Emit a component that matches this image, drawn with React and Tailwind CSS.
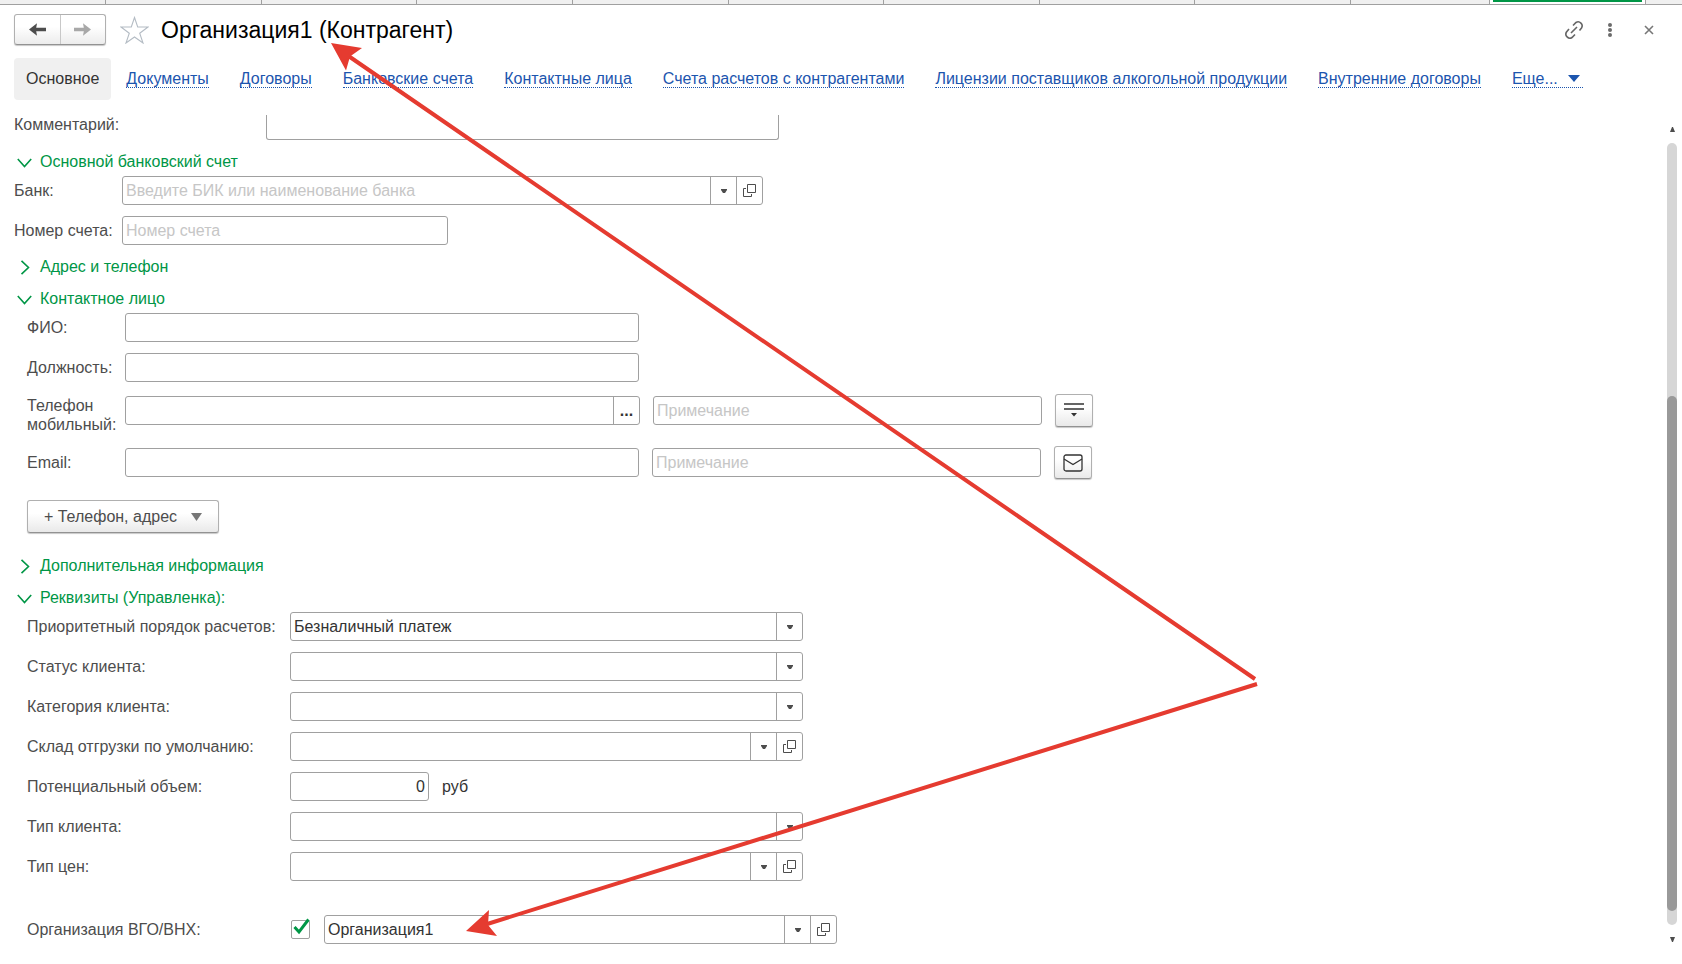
import { useState } from "react";

const openTabs = [1, 2, 3, 4, 5, 6, 7, 8];

const links = [
  "Документы",
  "Договоры",
  "Банковские счета",
  "Контактные лица",
  "Счета расчетов с контрагентами",
  "Лицензии поставщиков алкогольной продукции",
  "Внутренние договоры",
];

const box = "flex h-[29px] rounded-[3px] border border-[#a0a0a0] bg-white";
const control = "min-w-0 flex-1 bg-transparent px-[3px] text-[#333] outline-none placeholder:text-[#c6c6c6]";
const cell = "flex shrink-0 items-center justify-center border-l border-[#a0a0a0]";
const raised =
  "flex h-[33px] items-center justify-center rounded-[3px] border border-[#b0b0b0] border-b-[#929292] bg-linear-to-b from-white from-40% to-[#e9e9e9] shadow-[0_1px_1px_#c8c8c8]";

function SmallArrow() {
  return (
    <svg width="6" height="4" viewBox="0 0 6 4" fill="#4d4d4d">
      <path d="M0 0h6v1L4 4H2L0 1z" />
    </svg>
  );
}

function OpenIcon() {
  return (
    <svg width="13" height="13" viewBox="0 0 13 13" fill="none" stroke="#4d4d4d">
      <path d="M4.5 .5h8v8h-8zM3 4.5H.5v8h8V10" />
    </svg>
  );
}

function OpenButton({ label }) {
  return (
    <button type="button" aria-label={`Открыть: ${label}`} className={`${cell} w-[26px]`}>
      <OpenIcon />
    </button>
  );
}

function SelectField({ id, label, value = "", withOpen = false, className = "" }) {
  return (
    <div className={`${box} ${className}`}>
      <select id={id} aria-label={label} defaultValue={value} className={`${control} appearance-none`}>
        <option value={value}>{value}</option>
      </select>
      <span className={`${cell} w-[26px]`} aria-hidden="true">
        <SmallArrow />
      </span>
      {withOpen && <OpenButton label={label} />}
    </div>
  );
}

function SectionTitle({ title, open = false, className = "" }) {
  return (
    <button
      type="button"
      aria-expanded={open}
      className={`flex h-5 items-center gap-2 pl-[3px] text-[#009646] ${className}`}
    >
      <svg width="15" height="15" viewBox="0 0 15 15" fill="none" stroke="currentColor" strokeWidth="1.6">
        {open ? <path d="M.8 4l6.700 7.500L14.200 4" /> : <path d="M4.500 .8l7 6.700-7 6.700" />}
      </svg>
      {title}
    </button>
  );
}

function Row({ id, label, labelWidth, children }) {
  return (
    <div className="flex items-center">
      <label htmlFor={id} className={`shrink-0 ${labelWidth}`}>
        {label}
      </label>
      {children}
    </div>
  );
}

function TopTabs() {
  return (
    <div className="flex h-[5px] border-b border-[#a0a0a0] bg-[#f0f0f0]">
      <div className="w-[106px] border-r border-[#a0a0a0]" />
      <div className="flex flex-1">
        {openTabs.map((tab) => (
          <div key={tab} className="flex-1 border-r border-[#a0a0a0]" />
        ))}
      </div>
      <div className="w-[139px] border-r border-[#a0a0a0]" />
      <div className="w-[156px] border-r border-[#a0a0a0] bg-white px-[3px]">
        <div className="h-[2px] bg-[#009646]" />
      </div>
      <div className="w-9" />
    </div>
  );
}

function Header() {
  return (
    <header className="flex h-[53px] items-center px-3.5 pb-1">
      <div className="flex h-[31px] w-[92px] rounded-[3px] border border-[#b0b0b0] border-b-[#929292] bg-linear-to-b from-white from-40% to-[#ececec] shadow-[0_1px_1px_#c8c8c8]">
        <button type="button" aria-label="Назад" className="flex flex-1 items-center justify-center">
          <svg width="17" height="13" viewBox="0 0 17 13" fill="#4d4d4d">
            <path d="M0 6.500L8 .3 7.200 4.800H17v3.400H7.200L8 12.700z" />
          </svg>
        </button>
        <button
          type="button"
          aria-label="Вперед"
          className="flex flex-1 items-center justify-center border-l border-[#c8c8c8]"
        >
          <svg width="17" height="13" viewBox="0 0 17 13" fill="#a8a8a8">
            <path d="M17 6.500L9 .3l.8 4.500H0v3.400h9.800L9 12.700z" />
          </svg>
        </button>
      </div>
      <button type="button" aria-label="В избранное" className="ml-3.5">
        <svg width="29" height="28" viewBox="0 0 29 28" fill="none" stroke="#b4bcc4" strokeWidth="1.1">
          <path d="M14.500 1.500l3.200 9.500h10.300l-8.300 6.200 3.300 9.800-8.500-6-8.500 6 3.300-9.800L1 11h10.300z" />
        </svg>
      </button>
      <h1 className="ml-3 text-[23px] text-black">Организация1 (Контрагент)</h1>
      <div className="ml-auto flex items-center pr-3.5">
        <button type="button" aria-label="Ссылка" className="mr-6">
          <svg width="20" height="20" viewBox="0 0 20 20" fill="none" stroke="#666" strokeWidth="1.6">
            <path d="M9 5.500L12 2.500a4 4 0 0 1 5.500 5.500L15.500 10.500M11 14.500L8 17.500A4 4 0 0 1 2.500 12L5 9M7 13l6-6" />
          </svg>
        </button>
        <button type="button" aria-label="Меню" className="mr-8">
          <svg width="4" height="14" viewBox="0 0 4 14" fill="#6b6b6b">
            <circle cx="2" cy="2" r="2" />
            <circle cx="2" cy="7" r="2" />
            <circle cx="2" cy="12" r="2" />
          </svg>
        </button>
        <button type="button" aria-label="Закрыть">
          <svg width="10" height="10" viewBox="0 0 10 10" stroke="#777" strokeWidth="1.6">
            <path d="M1 1l8 8M9 1L1 9" />
          </svg>
        </button>
      </div>
    </header>
  );
}

function Navigation() {
  return (
    <nav className="flex h-[42px] items-center gap-[31px] px-3.5 whitespace-nowrap text-[#1c55ae]">
      <a
        href="#main"
        aria-current="page"
        className="-mr-4 flex h-full items-center rounded-[4px] bg-[#f0f0f0] px-3 text-[#333]"
      >
        Основное
      </a>
      {links.map((link) => (
        <a key={link} href="#link" className="border-b border-dotted border-[#1c55ae] leading-4">
          {link}
        </a>
      ))}
      <button type="button" className="flex items-center gap-2.5 border-b border-dotted border-[#1c55ae] pr-[3px] leading-4">
        Еще...
        <svg width="12" height="7" viewBox="0 0 12 7" fill="currentColor">
          <path d="M0 0h12L6 7z" />
        </svg>
      </button>
    </nav>
  );
}

function BankSection() {
  return (
    <>
      <SectionTitle title="Основной банковский счет" open className="mt-3" />
      <div className="mt-1 flex flex-col gap-[11px]">
        <Row id="bank" label="Банк:" labelWidth="w-[108px]">
          <div className={`${box} w-[641px]`}>
            <input id="bank" type="text" placeholder="Введите БИК или наименование банка" className={control} />
            <button type="button" aria-label="Выбрать банк" className={`${cell} w-[26px]`}>
              <SmallArrow />
            </button>
            <OpenButton label="Банк" />
          </div>
        </Row>
        <Row id="account" label="Номер счета:" labelWidth="w-[108px]">
          <div className={`${box} w-[326px]`}>
            <input id="account" type="text" placeholder="Номер счета" className={control} />
          </div>
        </Row>
      </div>
    </>
  );
}

function ContactSection() {
  return (
    <>
      <SectionTitle title="Контактное лицо" open className="mt-3" />
      <div className="mt-1 flex flex-col pl-[13px]">
        <Row id="fio" label="ФИО:" labelWidth="w-[98px]">
          <div className={`${box} w-[514px]`}>
            <input id="fio" type="text" className={control} />
          </div>
        </Row>
        <div className="mt-[11px]">
          <Row id="position" label="Должность:" labelWidth="w-[98px]">
            <div className={`${box} w-[514px]`}>
              <input id="position" type="text" className={control} />
            </div>
          </Row>
        </div>
        <div className="mt-1 leading-[19px]">
          <Row id="phone" label="Телефон мобильный:" labelWidth="w-[98px] pt-2.5">
            <div className={`${box} w-[515px]`}>
              <input id="phone" type="text" className={control} />
              <button type="button" aria-label="Изменить телефон" className={`${cell} w-[26px] font-bold text-[#333]`}>
                ...
              </button>
            </div>
            <div className={`${box} ml-[13px] w-[389px]`}>
              <input type="text" aria-label="Примечание к телефону" placeholder="Примечание" className={control} />
            </div>
            <button type="button" aria-label="Действия с телефоном" className={`${raised} ml-[13px] w-[38px]`}>
              <svg width="20" height="14" viewBox="0 0 20 14" fill="none" stroke="#333" strokeWidth="1.5">
                <path d="M0 1h20M0 6h20" />
                <path d="M7 10h6l-3 3.500z" fill="#333" stroke="none" />
              </svg>
            </button>
          </Row>
        </div>
        <div className="mt-3">
          <Row id="email" label="Email:" labelWidth="w-[98px]">
            <div className={`${box} w-[514px]`}>
              <input id="email" type="email" className={control} />
            </div>
            <div className={`${box} ml-[13px] w-[389px]`}>
              <input type="text" aria-label="Примечание к email" placeholder="Примечание" className={control} />
            </div>
            <button type="button" aria-label="Написать письмо" className={`${raised} ml-[13px] w-[38px]`}>
              <svg width="20" height="18" viewBox="0 0 20 18" fill="none" stroke="#333" strokeWidth="1.3">
                <rect x="1" y="1" width="18" height="16" rx="2" />
                <path d="M1 5l9 5.500L19 5" />
              </svg>
            </button>
          </Row>
        </div>
        <button type="button" className={`${raised} mt-[21px] w-[192px] gap-3.5`}>
          <span>+ Телефон, адрес</span>
          <svg width="11" height="8" viewBox="0 0 11 8" fill="#777">
            <path d="M0 0h11L5.500 8z" />
          </svg>
        </button>
      </div>
    </>
  );
}

function RequisitesSection() {
  const [isInternal, setIsInternal] = useState(true);

  return (
    <>
      <SectionTitle title="Реквизиты (Управленка):" open className="mt-3" />
      <div className="mt-1 flex flex-col gap-[11px] pl-[13px]">
        <Row id="priority" label="Приоритетный порядок расчетов:" labelWidth="w-[263px]">
          <SelectField id="priority" label="Приоритетный порядок расчетов" value="Безналичный платеж" className="w-[513px]" />
        </Row>
        <Row id="status" label="Статус клиента:" labelWidth="w-[263px]">
          <SelectField id="status" label="Статус клиента" className="w-[513px]" />
        </Row>
        <Row id="category" label="Категория клиента:" labelWidth="w-[263px]">
          <SelectField id="category" label="Категория клиента" className="w-[513px]" />
        </Row>
        <Row id="warehouse" label="Склад отгрузки по умолчанию:" labelWidth="w-[263px]">
          <SelectField id="warehouse" label="Склад отгрузки по умолчанию" withOpen className="w-[513px]" />
        </Row>
        <Row id="volume" label="Потенциальный объем:" labelWidth="w-[263px]">
          <div className={`${box} w-[139px]`}>
            <input id="volume" type="text" defaultValue="0" className={`${control} text-right`} />
          </div>
          <span className="ml-[13px] text-[#333]">руб</span>
        </Row>
        <Row id="clientType" label="Тип клиента:" labelWidth="w-[263px]">
          <SelectField id="clientType" label="Тип клиента" className="w-[513px]" />
        </Row>
        <Row id="priceType" label="Тип цен:" labelWidth="w-[263px]">
          <SelectField id="priceType" label="Тип цен" withOpen className="w-[513px]" />
        </Row>
      </div>
      <div className="mt-[34px] pl-[13px]">
        <Row id="internal" label="Организация ВГО/ВНХ:" labelWidth="w-[264px]">
          <span className="relative mr-3.5 size-[19px]">
            <input
              id="internal"
              type="checkbox"
              checked={isInternal}
              onChange={(e) => setIsInternal(e.target.checked)}
              className="block size-[19px] appearance-none rounded-[2px] border border-[#a0a0a0]"
            />
            {isInternal && (
              <svg
                className="pointer-events-none absolute -top-0.5 left-0"
                width="19"
                height="19"
                viewBox="0 0 19 19"
                fill="none"
                stroke="#009646"
                strokeWidth="3"
              >
                <path d="M3.500 9l4.500 5L17.500 1.500" />
              </svg>
            )}
          </span>
          <SelectField id="organization" label="Организация" value="Организация1" withOpen className="w-[513px]" />
        </Row>
      </div>
    </>
  );
}

function ScrollBar() {
  return (
    <div className="flex w-2.5 flex-col items-center pt-3 pb-[22px]" aria-hidden="true">
      <svg width="5" height="5" viewBox="0 0 5 5" fill="#4d4d4d">
        <path d="M2 0h1l2 5H0z" />
      </svg>
      <div className="mt-[11px] mb-3 flex w-2.5 flex-1 flex-col rounded-full bg-[#d6d6d6] pb-3.5">
        <div className="mt-auto h-[67%] rounded-full bg-[#999]" />
      </div>
      <svg width="5" height="5" viewBox="0 0 5 5" fill="#4d4d4d">
        <path d="M0 0h5L3 5H2z" />
      </svg>
    </div>
  );
}

function Arrows() {
  return (
    <svg
      className="pointer-events-none absolute top-0 left-0"
      width="1300"
      height="960"
      viewBox="0 0 1300 960"
      fill="#e53b30"
      stroke="#e53b30"
      aria-hidden="true"
    >
      <path d="M1255 679L347 55M1257 684L484 925" strokeWidth="4" />
      <path d="M331 43l31 5-12 8.500-4 14z" stroke="none" />
      <path d="M466 931l23-21-1 15 9 11z" stroke="none" />
    </svg>
  );
}

export default function App() {
  return (
    <div className="relative flex min-h-screen flex-col bg-white font-['Liberation_Sans',Arial,sans-serif] text-[16px] leading-5 text-[#4d4d4d]">
      <TopTabs />
      <Header />
      <Navigation />
      <div className="mt-[15px] flex flex-1 pr-[5px]">
        <main className="flex-1 pl-3.5">
          <div className="flex h-[25px] items-start">
            <label htmlFor="comment" className="w-[252px]">
              Комментарий:
            </label>
            <input
              id="comment"
              type="text"
              className="h-[25px] w-[513px] rounded-b-[3px] border border-t-0 border-[#a0a0a0] px-[3px] outline-none"
            />
          </div>
          <BankSection />
          <SectionTitle title="Адрес и телефон" className="mt-3" />
          <ContactSection />
          <SectionTitle title="Дополнительная информация" className="mt-[23px]" />
          <RequisitesSection />
        </main>
        <ScrollBar />
      </div>
      <Arrows />
    </div>
  );
}
